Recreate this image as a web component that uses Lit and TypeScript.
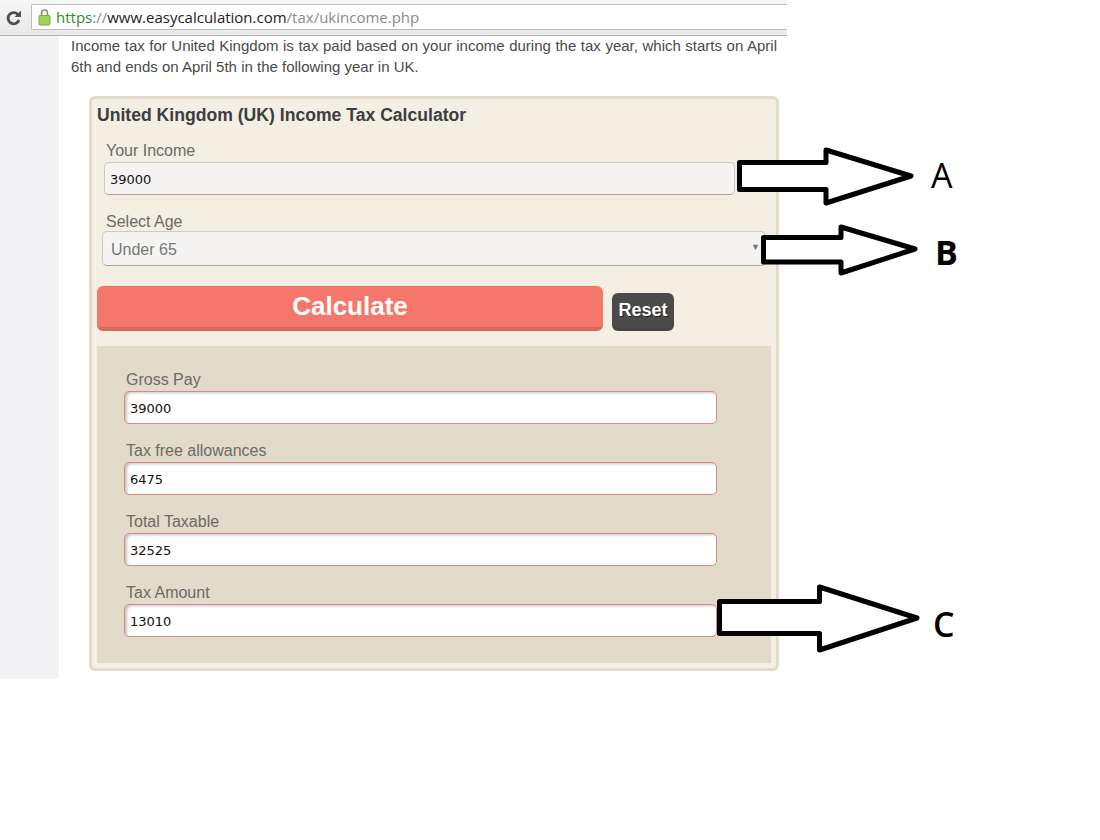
import { LitElement, html, css, svg } from "lit";
import { customElement } from "lit/decorators.js";

const arrowPath = (l: number, t: number, b: number, n: number, ht: number, hb: number, tx: number, ty: number) =>
  `M${l} ${t}H${n}V${ht}L${tx} ${ty}L${n} ${hb}V${b}H${l}Z`;

const arrows = [
  arrowPath(739.5, 162.5, 189.5, 826, 150, 203, 911, 176),
  arrowPath(763.5, 237.5, 262, 841, 227, 273, 915, 249),
  arrowPath(719.5, 601.5, 633.5, 819.5, 587, 650, 917, 618),
];

const results = [
  ["Gross Pay", "39000"],
  ["Tax free allowances", "6475"],
  ["Total Taxable", "32525"],
  ["Tax Amount", "13010"],
];

@customElement("app-root")
export class AppRoot extends LitElement {
  static styles = css`
    :host { display: block; width: 1100px; height: 840px; background: #fff; position: relative; overflow: hidden; font-family: "Liberation Sans", Arial, sans-serif; }
    .shell { width: 787px; }
    .toolbar { height: 36px; box-sizing: border-box; display: flex; align-items: flex-start; padding: 4px 0 0 5px; gap: 9px; background: linear-gradient(#f7f7f7, #e9e9e9); border-bottom: 1px solid #b4b4b4; }
    .reload { width: 17px; height: 17px; margin-top: 6px; }
    .url { flex: 1; height: 26px; box-sizing: border-box; display: flex; align-items: center; gap: 5px; padding-left: 6px; background: #fff; border: 1px solid #bdbdbd; border-right: none; border-radius: 2px 0 0 2px; font-family: "Open Sans", sans-serif; font-size: 15px; color: #8a8a8a; white-space: nowrap; }
    .url b { font-weight: 400; color: #2f8a2f; }
    .url i { font-style: normal; color: #222; }
    .lock { width: 13px; height: 18px; flex: none; }
    .page { display: flex; height: 643px; }
    .side { width: 59px; background: #f3f2f5; flex: none; }
    .main { flex: 1; padding: 0 10px 0 12px; }
    .intro { margin: -1px 0 0; font-size: 15px; line-height: 21px; color: #4a4a4a; width: 706px; text-align: justify; }
    .card { margin: 19px 0 0 18px; width: 690px; height: 575px; box-sizing: border-box; border: 3px solid #e2dbca; border-radius: 6px; background: #f3efe3; padding: 4px 5px 5px; }
    h2 { margin: 0; font-size: 17.6px; line-height: 24px; font-weight: 700; color: #3d3d3d; }
    label { display: block; font-size: 16px; line-height: 18px; color: #6e6a66; }
    .income { margin: 15px 0 0 9px; }
    input, .select { box-sizing: border-box; display: block; border-radius: 5px; font-family: "DejaVu Sans", sans-serif; font-size: 13px; color: #111; outline: none; }
    .gray { width: 631px; height: 33px; margin: 2px 0 0 -2px; padding: 1px 5px 0; background: #f5f4f2; border: 1px solid #cfcbc2; border-bottom-color: #a9a69e; }
    .age { margin: 18px 0 0 9px; }
    .select { position: relative; width: 664px; height: 35px; margin: 0 0 0 -4px; padding: 2px 8px 0; background: #f5f4f2; border: 1px solid #cfcbc2; border-bottom-color: #a9a69e; display: flex; align-items: center; font-family: "Liberation Sans", sans-serif; font-size: 16px; color: #777; }
    .caret { position: absolute; right: 5px; top: 10px; font-size: 9px; color: #777; }
    .actions { display: flex; align-items: flex-end; gap: 9px; margin-top: 20px; }
    button { border: none; font-family: "Liberation Sans", sans-serif; font-weight: 700; color: #fff; padding: 0; }
    .calc { width: 506px; height: 45px; border-radius: 6px; background: #f5776b; border-bottom: 4px solid #d9695f; font-size: 26px; line-height: 39px; }
    .reset { width: 62px; height: 38px; border-radius: 6px; background: #4b4b4b; border-bottom: 3px solid #454545; font-size: 18px; text-shadow: 1px 1px 1px #222; }
    .panel { margin-top: 15px; width: 674px; height: 317px; box-sizing: border-box; background: #e2dbca; padding: 25px 0 0 29px; display: flex; flex-direction: column; gap: 18px; }
    .panel input { width: 593px; height: 33px; margin: 2px 0 0 -2px; padding: 1px 5px 0; background: #fff; border: 1px solid #de8585; box-shadow: inset 3px 2px 3px -1px #c4c4c4; }
    .overlay { position: absolute; left: 0; top: 0; pointer-events: none; }
    .mark { position: absolute; font-family: "Open Sans", sans-serif; font-size: 34px; line-height: 40px; color: #000; }
    .m-a { left: 931px; top: 155px; font-weight: 400; }
    .m-b { left: 935px; top: 232px; font-weight: 700; }
    .m-c { left: 933px; top: 604px; font-weight: 600; }
  `;

  render() {
    return html`
      <div class="shell">
        <div class="toolbar">
          <svg class="reload" viewBox="0 0 17 17"><path d="M13.4 5.2A5.6 5.6 0 1 0 14 10" fill="none" stroke="#4e4e4e" stroke-width="2.8"/><path d="M9.6 7h6.4V.6z" fill="#4e4e4e"/></svg>
          <div class="url">
            <svg class="lock" viewBox="0 0 13 18"><path d="M3.5 8V5a3 3 0 0 1 6 0v3" fill="none" stroke="#8a8a8a" stroke-width="1.6"/><rect x="1" y="7.5" width="11" height="9.5" rx="1" fill="#9ed65c" stroke="#7fa84c"/></svg>
            <span><b>https</b>://<i>www.easycalculation.com</i>/tax/ukincome.php</span>
          </div>
        </div>
        <div class="page">
          <div class="side"></div>
          <div class="main">
            <p class="intro">Income tax for United Kingdom is tax paid based on your income during the tax year, which starts on April 6th and ends on April 5th in the following year in UK.</p>
            <div class="card">
              <h2>United Kingdom (UK) Income Tax Calculator</h2>
              <div class="income"><label>Your Income</label><input class="gray" .value=${"39000"} /></div>
              <div class="age"><label>Select Age</label><div class="select">Under 65<span class="caret">▼</span></div></div>
              <div class="actions"><button class="calc">Calculate</button><button class="reset">Reset</button></div>
              <div class="panel">
                ${results.map(([l, v]) => html`<div><label>${l}</label><input .value=${v} /></div>`)}
              </div>
            </div>
          </div>
        </div>
      </div>
      <svg class="overlay" width="1100" height="840" viewBox="0 0 1100 840">
        ${arrows.map((d) => svg`<path d=${d} fill="#fff" stroke="#000" stroke-width="5" stroke-linejoin="round"/>`)}
      </svg>
      <div class="mark m-a">A</div>
      <div class="mark m-b">B</div>
      <div class="mark m-c">C</div>
    `;
  }
}
